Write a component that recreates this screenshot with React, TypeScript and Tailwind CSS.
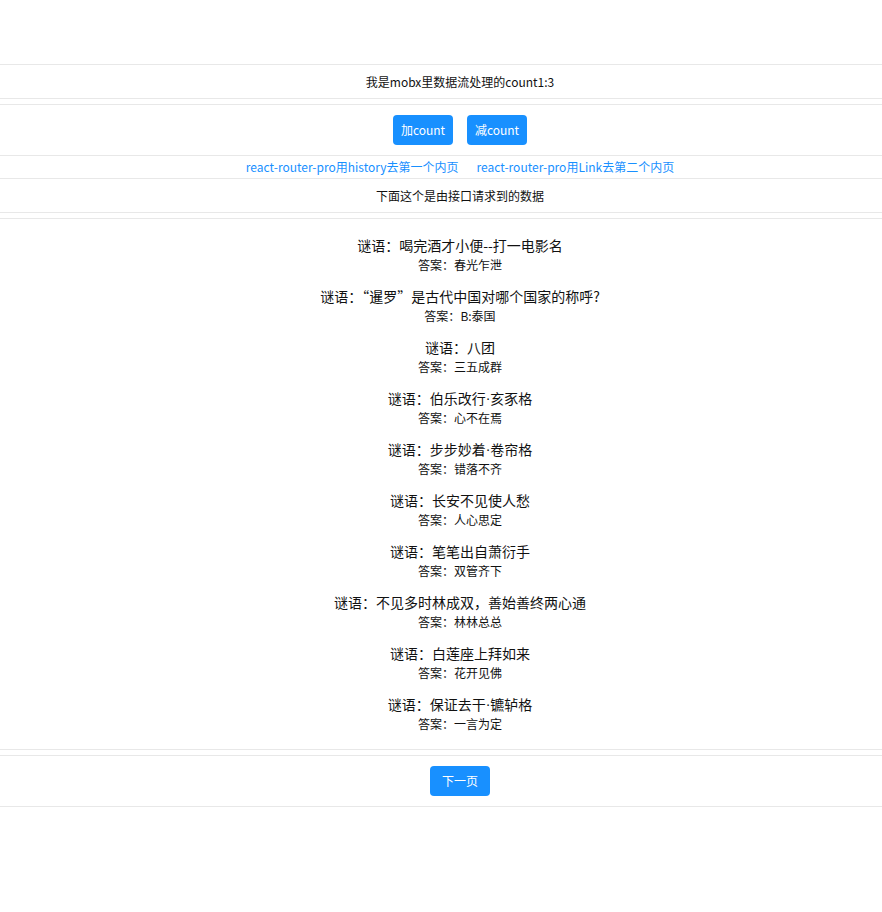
import React from 'react';

const riddles = [
  { q: '喝完酒才小便--打一电影名', a: '春光乍泄' },
  { q: '“暹罗”是古代中国对哪个国家的称呼?', a: 'B:泰国' },
  { q: '八团', a: '三五成群' },
  { q: '伯乐改行·亥豕格', a: '心不在焉' },
  { q: '步步妙着·卷帘格', a: '错落不齐' },
  { q: '长安不见使人愁', a: '人心思定' },
  { q: '笔笔出自萧衍手', a: '双管齐下' },
  { q: '不见多时林成双，善始善终两心通', a: '林林总总' },
  { q: '白莲座上拜如来', a: '花开见佛' },
  { q: '保证去干·镳轳格', a: '一言为定' },
];

// the middle dot is narrow in the original font
const withDot = (text: string) => {
  const parts = text.split('·');
  return parts.map((p, i) => (
    <React.Fragment key={i}>
      {i > 0 && <span className="align-top font-['Liberation_Sans',sans-serif]">·</span>}
      {p}
    </React.Fragment>
  ));
};

const App = () => {
  return (
    <div className="min-h-[912px] bg-white pt-16 text-[#111] font-['Noto_Sans_CJK_SC',sans-serif]">
      {/* mobx count */}
      <div className="flex h-[35px] items-center justify-center border-y border-[#e8e8e8] pl-[38px] text-xs">
        我是mobx里数据流处理的count1:3
      </div>

      {/* buttons + links + title */}
      <div className="mt-[5px] border-y border-[#e8e8e8]">
        <div className="flex h-[50px] items-center justify-center gap-[14px] pl-[38px]">
          <button className="h-[30px] w-[60px] rounded bg-[#1890ff] text-xs text-white">加count</button>
          <button className="h-[30px] w-[60px] rounded bg-[#1890ff] text-xs text-white">减count</button>
        </div>
        <div className="flex h-[24px] items-center justify-center gap-[18px] border-y border-[#e8e8e8] pl-[38px] text-xs text-[#1890ff]">
          <a>react-router-pro用history去第一个内页</a>
          <a>react-router-pro用Link去第二个内页</a>
        </div>
        <div className="flex h-[33px] items-center justify-center pl-[38px] text-xs">
          下面这个是由接口请求到的数据
        </div>
      </div>

      {/* riddle list */}
      <div className="mt-[5px] flex flex-col items-center gap-[11px] border-y border-[#e8e8e8] pb-[15px] pl-[38px] pt-4">
        {riddles.map((r) => (
          <div key={r.q} className="flex flex-col items-center">
            <p className="h-5 text-sm leading-5">谜语：{withDot(r.q)}</p>
            <p className="h-5 text-xs leading-5">答案：{r.a}</p>
          </div>
        ))}
      </div>

      {/* pager */}
      <div className="mt-[5px] flex h-[52px] items-center justify-center border-y border-[#e8e8e8] pl-[38px]">
        <button className="h-[30px] w-[60px] rounded bg-[#1890ff] text-xs text-white">下一页</button>
      </div>
    </div>
  );
};

export default App;
